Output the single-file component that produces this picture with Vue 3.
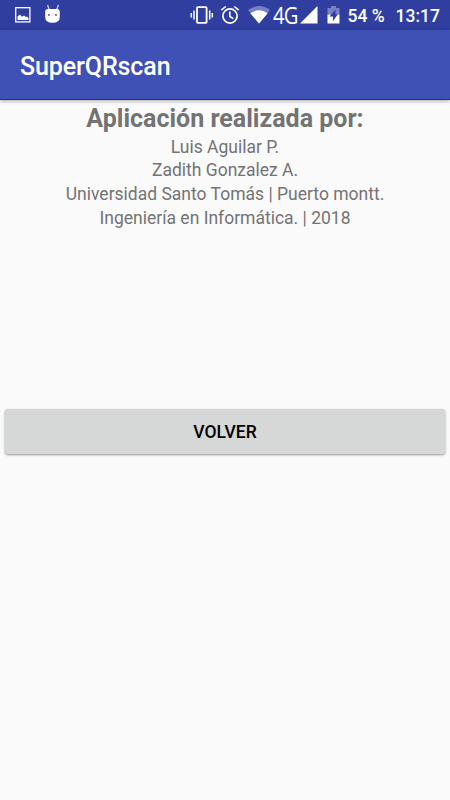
<script setup>
import { ref } from 'vue'

const credits = ref([
  'Luis Aguilar P.',
  'Zadith Gonzalez A.',
  'Universidad Santo Tomás | Puerto montt.',
  'Ingeniería en Informática. | 2018'
])
</script>

<template>
  <div class="app">
    <div class="status-bar">
      <svg class="picture" width="16" height="16" viewBox="0 0 16 16">
        <rect x="0.7" y="0.7" width="14.2" height="14.2" fill="none" stroke="#fff" stroke-width="1.3" />
        <path d="M2.5 13V9.5l2.5-2 2 2.2 2-1.2 1.8 1.5 1.2-.5 1.5 1.5V13z" fill="#fff" />
      </svg>
      <svg class="android" width="18" height="20" viewBox="0 0 18 20">
        <path d="M5.2 5.5L3.6 1M12.8 5.5L14.4 1" stroke="#c9cdea" stroke-width="1.3" />
        <path d="M1.2 8Q1.2 5 4 5H13Q15.8 5 15.8 8V13Q15.8 18.8 8.5 18.8T1.2 13z" fill="#fff" />
        <path d="M4 10h2v1.8H4zM11 10h2v1.8h-2z" fill="#6670b8" />
      </svg>

      <svg class="vibrate" width="24" height="20" viewBox="0 0 24 20">
        <rect x="7" y="2.2" width="9.6" height="15.6" rx="0.8" fill="none" stroke="#fff" stroke-width="1.8" />
        <path d="M4 5.5v9M19.7 5.5v9M1.3 8v4.5M22.3 8v4.5" stroke="#fff" stroke-width="1.5" />
      </svg>
      <svg class="alarm" width="20" height="20" viewBox="0 0 20 20">
        <circle cx="10" cy="11" r="7.1" fill="none" stroke="#fff" stroke-width="1.7" />
        <path d="M1.3 5.2L5.7 1.5M18.7 5.2L14.3 1.5M9.8 6.5v5l3.5 2.1" fill="none" stroke="#fff" stroke-width="1.6" />
      </svg>
      <svg class="wifi" width="23" height="18" viewBox="0 0 23 18">
        <path d="M0 4Q11.5-3.8 22 4L11 17.5z" fill="#7780c3" />
        <path d="M2.3 7.2Q11 1.4 19.7 7.2L11 17.5z" fill="#fff" />
      </svg>
      <span class="network">4G</span>
      <svg class="signal" width="18" height="18" viewBox="0 0 18 18">
        <path d="M17.500 0V17.500H0z" fill="#fff" />
      </svg>
      <svg class="battery" width="13" height="18" viewBox="0 0 13 18">
        <path d="M0.5 2H4V0h5v2h3.5v6.500h-12z" fill="#7780c3" />
        <path d="M0.5 8.500h12V17.500h-12z" fill="#fff" />
        <path d="M8.500 3.500L2.400 10.500h3.500v4.800L10.800 8.300H8.500z" fill="#303f9f" />
      </svg>
      <span class="percent">54 %</span>
      <span class="clock">13:17</span>
    </div>

    <div class="toolbar">SuperQRscan</div>

    <div class="content">
      <h1>Aplicación realizada por:</h1>
      <p v-for="line in credits" :key="line">{{ line }}</p>
    </div>

    <button class="back-button">VOLVER</button>
  </div>
</template>

<style>
body {
  margin: 0;
  background: #fafafa;
}
</style>

<style scoped>
.app {
  height: 800px;
  display: flex;
  flex-direction: column;
  overflow: hidden;

  background: #fafafa;
  font-family: Roboto, sans-serif;
}

.status-bar {
  box-sizing: border-box;
  height: 30px;
  flex: none;
  display: flex;
  align-items: center;
  padding: 0 10px 0 15px;

  background: #303f9f;
  color: white;
  white-space: nowrap;
}

.status-bar svg {
  flex: none;
}

.android {
  margin: -3px 0 0 13px;
}

.vibrate {
  margin-left: auto;
}

.alarm {
  margin-left: 6px;
}

.wifi {
  margin-left: 8px;
}

.network {
  width: 25px;
  margin-left: 2px;
  font-family: 'Open Sans', sans-serif;
  font-size: 23px;
  line-height: 30px;
  letter-spacing: -1px;
  transform: scaleX(0.88);
  transform-origin: left;
}

.signal {
  margin-left: 2px;
}

.battery {
  margin-left: 9px;
}

.percent {
  width: 38px;
  margin-left: 8px;
  padding-top: 1px;
  font-size: 17.5px;
  font-weight: 500;
  line-height: 20px;
}

.clock {
  margin-left: 10px;
  padding-top: 1px;
  font-size: 17.5px;
  font-weight: 500;
  line-height: 20px;
}

.toolbar {
  box-sizing: border-box;
  height: 70px;
  flex: none;
  display: flex;
  align-items: center;
  padding: 3px 20px 0;

  background: #3f51b5;
  border-bottom: 1px solid #1730a5;
  box-shadow: 0 1px 4px rgba(0, 0, 0, 0.35);
  color: white;
  font-size: 25px;
  font-weight: 500;
  letter-spacing: -0.1px;
}

.content {
  height: 304px;
  flex: none;
  color: #737373;
  text-align: center;
}

h1 {
  margin: 0;
  padding: 4px 0 1.5px;
  font-size: 25px;
  font-weight: 700;
  line-height: 30px;
}

p {
  margin: 0;
  font-size: 17.5px;
  line-height: 23.75px;
}

.back-button {
  height: 45px;
  flex: none;
  margin: 5px 5px 0;
  padding: 0;

  background: #d6d7d7;
  border: none;
  border-radius: 2.5px;
  box-shadow: 0 1px 2.5px rgba(0, 0, 0, 0.38);
  color: #000;
  font-family: inherit;
  font-size: 17.5px;
  font-weight: 500;
}
</style>
